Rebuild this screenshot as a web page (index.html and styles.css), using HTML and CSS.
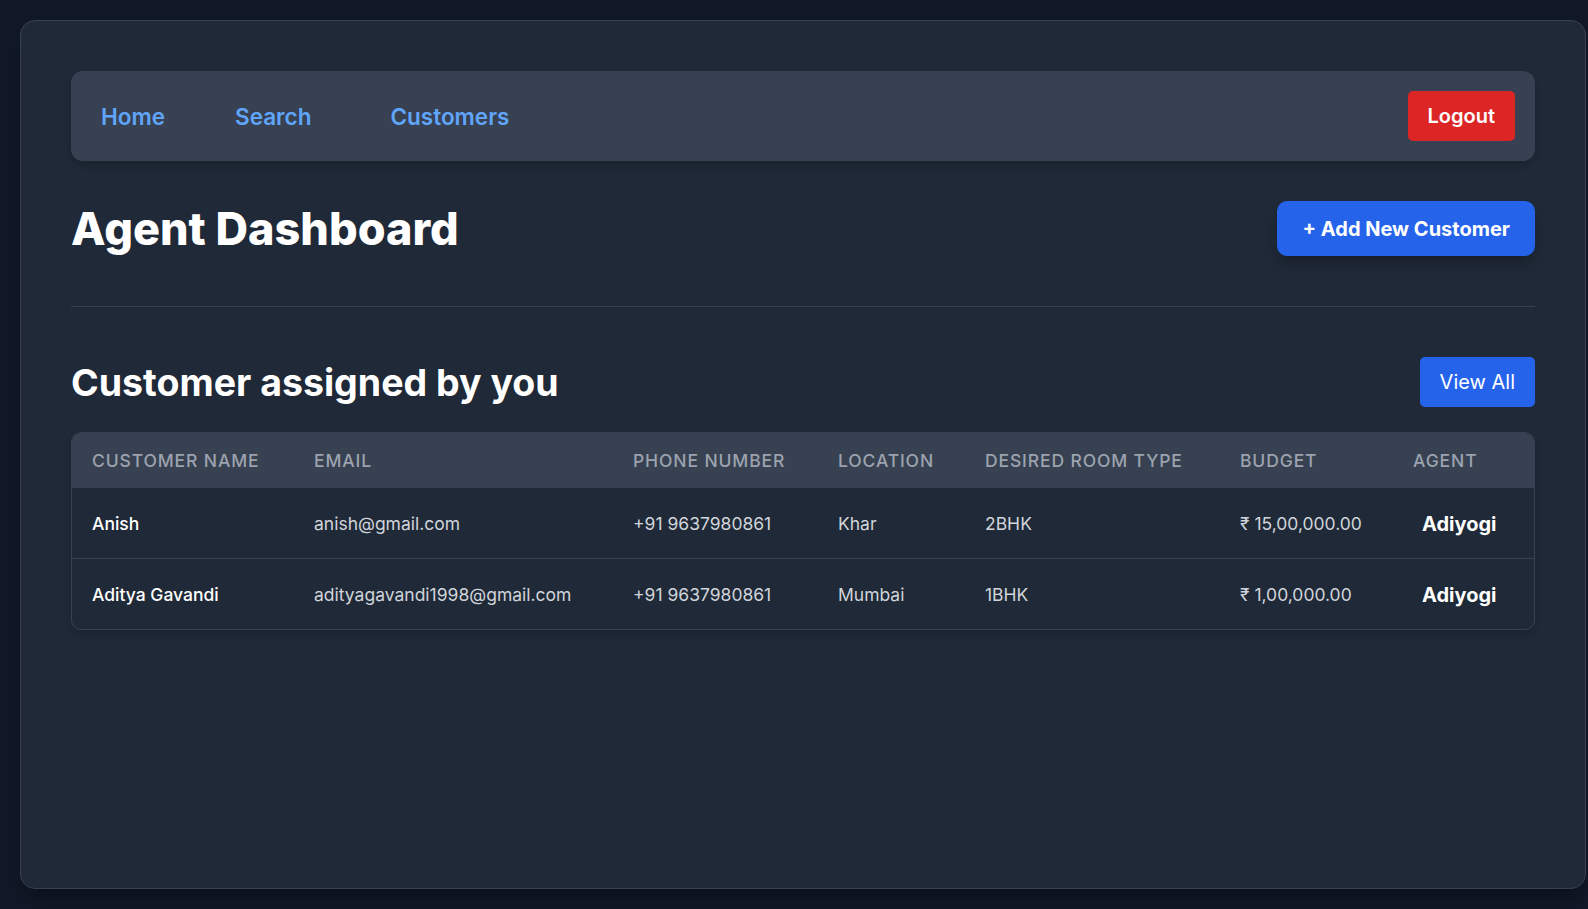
FILE: index.html
```html
<!DOCTYPE html>
<html lang="en">
<head>
<meta charset="utf-8">
<title>Agent Dashboard</title>
<link rel="stylesheet" href="styles.css">
</head>
<body>
  <main class="card">
    <nav class="nav">
      <div class="nav-links">
        <a class="nav-link link-home" href="#">Home</a>
        <a class="nav-link link-search" href="#">Search</a>
        <a class="nav-link" href="#">Customers</a>
      </div>
      <button class="btn btn-logout">Logout</button>
    </nav>

    <header class="page-head">
      <h1 class="page-title">Agent Dashboard</h1>
      <button class="btn btn-add">+ Add New Customer</button>
    </header>

    <section class="section">
      <div class="section-head">
        <h2 class="section-title">Customer assigned by you</h2>
        <button class="btn btn-view">View All</button>
      </div>

      <div class="table-wrap">
        <table class="table">
          <colgroup>
            <col class="c-name">
            <col class="c-email">
            <col class="c-phone">
            <col class="c-loc">
            <col class="c-room">
            <col class="c-budget">
            <col class="c-agent">
          </colgroup>
          <thead>
            <tr>
              <th>Customer Name</th>
              <th>Email</th>
              <th>Phone Number</th>
              <th>Location</th>
              <th>Desired Room Type</th>
              <th>Budget</th>
              <th>Agent</th>
            </tr>
          </thead>
          <tbody>
            <tr>
              <td class="name">Anish</td>
              <td>anish@gmail.com</td>
              <td>+91 9637980861</td>
              <td>Khar</td>
              <td>2BHK</td>
              <td>₹ 15,00,000.00</td>
              <td class="agent">Adiyogi</td>
            </tr>
            <tr>
              <td class="name">Aditya Gavandi</td>
              <td>adityagavandi1998@gmail.com</td>
              <td>+91 9637980861</td>
              <td>Mumbai</td>
              <td>1BHK</td>
              <td>₹ 1,00,000.00</td>
              <td class="agent">Adiyogi</td>
            </tr>
          </tbody>
        </table>
      </div>
    </section>
  </main>
</body>
</html>
```

FILE: styles.css
```css
* {
  box-sizing: border-box;
}

html, body {
  margin: 0;
  padding: 0;
}

body {
  background: #111827;
  font-family: Inter, "Noto Sans", "Liberation Sans", sans-serif;
  color: #ffffff;
  overflow: hidden;
}

.card {
  margin: 20px 2px 20px 20px;
  height: calc(100vh - 40px);
  background: #1f2937;
  border: 1px solid #374151;
  border-radius: 15px;
  padding: 50px;
  box-shadow: 0 12px 20px -4px rgba(0, 0, 0, 0.35);
}

/* NAV */
.nav {
  display: flex;
  align-items: center;
  justify-content: space-between;
  background: #374151;
  border-radius: 12px;
  padding: 20px 20px 20px 30px;
  box-shadow: 0 5px 10px -3px rgba(0, 0, 0, 0.25);
}

.nav-links {
  display: flex;
  align-items: center;
  padding-top: 2px;
}

.nav-link {
  color: #60a5fa;
  font-size: 22.5px;
  font-weight: 600;
  text-decoration: none;
  line-height: 30px;
}

.link-home {
  margin-right: 70px;
}

.link-search {
  margin-right: 79px;
}

.btn {
  border: none;
  color: #ffffff;
  font-family: inherit;
  font-size: 20px;
  line-height: 30px;
  cursor: pointer;
}

.btn-logout {
  background: #dc2626;
  font-weight: 600;
  padding: 10px 20px;
  border-radius: 5px;
}

/* PAGE HEAD */
.page-head {
  display: flex;
  align-items: center;
  justify-content: space-between;
  margin-top: 40px;
  padding-bottom: 50px;
  border-bottom: 1px solid #374151;
}

.page-title {
  margin: 0;
  font-size: 45px;
  line-height: 50px;
  font-weight: 800;
}

.btn-add {
  background: #2563eb;
  font-weight: 700;
  padding: 12.5px 25px;
  border-radius: 10px;
  box-shadow: 0 8px 14px -4px rgba(0, 0, 0, 0.35);
}

/* SECTION */
.section {
  margin-top: 50px;
}

.section-head {
  display: flex;
  align-items: center;
  justify-content: space-between;
  margin-bottom: 25px;
}

.section-title {
  margin: 0;
  font-size: 37.5px;
  line-height: 45px;
  font-weight: 700;
}

.btn-view {
  background: #2563eb;
  font-weight: 400;
  padding: 10px 20px;
  border-radius: 5px;
}

/* TABLE */
.table-wrap {
  border: 1px solid #374151;
  border-radius: 10px;
  overflow: hidden;
  box-shadow: 0 4px 8px -2px rgba(0, 0, 0, 0.2);
}

.table {
  width: 100%;
  border-collapse: separate;
  border-spacing: 0;
  table-layout: fixed;
}

.c-name { width: 222px; }
.c-email { width: 319px; }
.c-phone { width: 205px; }
.c-loc { width: 147px; }
.c-room { width: 255px; }
.c-budget { width: 173px; }

.table thead th {
  background: #374151;
  color: #9ca3af;
  font-size: 17.5px;
  line-height: 25px;
  font-weight: 500;
  text-transform: uppercase;
  letter-spacing: 0.05em;
  text-align: left;
  padding: 15px 20px;
  white-space: nowrap;
}

.table tbody td {
  color: #d1d5db;
  font-size: 17.5px;
  line-height: 30px;
  padding: 21px 20px 19px;
  white-space: nowrap;
  vertical-align: middle;
}

.table tbody tr + tr td {
  border-top: 1px solid #374151;
}

.table tbody td.name {
  color: #ffffff;
  font-weight: 500;
}

.table tbody td.agent {
  color: #ffffff;
  font-size: 20px;
  font-weight: 700;
  padding-left: 29px;
}
```
